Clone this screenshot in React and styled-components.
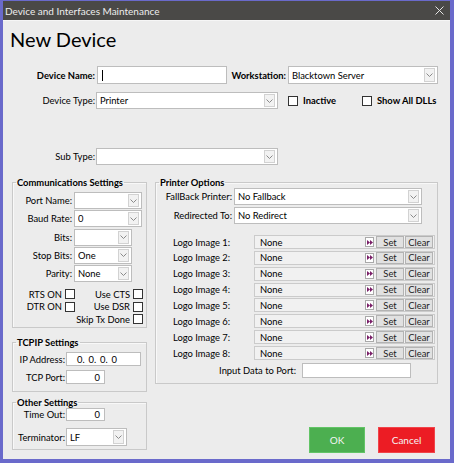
import React from "react"
import styled, { createGlobalStyle } from "styled-components"

const GlobalStyle = createGlobalStyle`
  html, body {
    margin: 0;
    padding: 0;
    background: #6a6acb;
  }
  body {
    font-family: Lato, "Noto Sans", sans-serif;
    font-size: 9.4px;
    color: #000;
  }
  * {
    box-sizing: border-box;
  }
`

const Window = styled.div`
  width: 454px;
  height: 463px;
  border-style: solid;
  border-color: #6a6acb;
  border-width: 1px 4px 4px 3px;
  background: #ececec;
  display: flex;
  flex-direction: column;
`

const TitleBar = styled.div`
  height: 20px;
  flex: none;
  background: #4a4947;
  color: #eeeeee;
  display: flex;
  align-items: center;
  justify-content: space-between;
  padding: 0 6px 0 2px;
  font-size: 10px;
  border-bottom: 1px solid #f6f6f6;
`

const Body = styled.div`
  flex: 1;
  display: flex;
  flex-direction: column;
`

const Heading = styled.h1`
  margin: 6px 0 0 7px;
  font-size: 20px;
  line-height: 24px;
  font-weight: 400;
`

const Row = styled.div`
  display: flex;
  align-items: center;
  flex: none;
  height: ${p => p.$h || 17}px;
  margin-top: ${p => p.$mt || 0}px;
`

const FieldLabel = styled.label`
  flex: none;
  width: ${p => p.$w}px;
  margin-left: ${p => p.$ml || 0}px;
  margin-right: ${p => (p.$gap === undefined ? 2 : p.$gap)}px;
  padding-left: ${p => p.$pl || 0}px;
  text-align: ${p => (p.$left ? "left" : "right")};
  font-weight: ${p => (p.$bold ? 700 : 400)};
  white-space: nowrap;
`

const TextBox = styled.div`
  flex: none;
  width: ${p => p.$w}px;
  height: ${p => p.$h || 17}px;
  background: #fff;
  border: 1px solid #bdbdbd;
  display: flex;
  align-items: center;
  justify-content: ${p => (p.$right ? "flex-end" : "flex-start")};
  padding: 0 ${p => (p.$right ? 4 : 3)}px 0 3px;
  white-space: pre;
`

const Caret = styled.span`
  width: 1px;
  height: 11px;
  margin-left: 1px;
  background: #000;
`

const ComboBox = styled.div`
  flex: none;
  width: ${p => p.$w}px;
  height: ${p => p.$h || 17}px;
  background: #fff;
  border: 1px solid #bdbdbd;
  display: flex;
  align-items: center;
  padding: 1px 2px 1px 3px;
`

const ComboValue = styled.span`
  flex: 1;
  white-space: nowrap;
  overflow: hidden;
`

const ArrowBox = styled.span`
  flex: none;
  width: 11px;
  height: 100%;
  border: 1px solid #d2d2d2;
  background: #f2f2f2;
  display: flex;
  align-items: center;
  justify-content: center;
`

const Combo = ({ w, h, value }) => (
  <ComboBox $w={w} $h={h}>
    <ComboValue>{value}</ComboValue>
    <ArrowBox>
      <svg width="7" height="4" viewBox="0 0 7 4">
        <polyline points="0.5,0.5 3.5,3.5 6.5,0.5" fill="none" stroke="#8a8a8a" strokeWidth="1" />
      </svg>
    </ArrowBox>
  </ComboBox>
)

const CheckBox = styled.span`
  flex: none;
  width: 10px;
  height: 10px;
  background: #fff;
  border: 1px solid #333;
`

const CheckItem = styled.label`
  flex: none;
  display: flex;
  align-items: center;
  gap: 5px;
  width: ${p => (p.$w ? `${p.$w}px` : "auto")};
  margin-left: ${p => p.$ml || 0}px;
  font-weight: 700;
`

const Lower = styled.div`
  display: flex;
  gap: 8px;
  margin: 12px 0 0 9px;
`

const Column = styled.div`
  flex: none;
  width: ${p => p.$w}px;
  display: flex;
  flex-direction: column;
`

const Group = styled.fieldset`
  margin: ${p => p.$mt || 0}px 0 0;
  padding: ${p => p.$pt || 0}px 0 0;
  min-width: 0;
  height: ${p => p.$h}px;
  border: 1px solid #c9c9c9;
  box-shadow: inset 1px 1px 0 #f8f8f8;
`

const Legend = styled.legend`
  margin-left: 3px;
  padding: 0 1px;
  font-weight: 700;
  line-height: 11px;
`

const Stack = styled.div`
  display: flex;
  flex-direction: column;
  gap: ${p => p.$gap || 0}px;
  margin-top: ${p => p.$mt || 0}px;
`

const CheckGrid = styled.div`
  display: grid;
  grid-template-columns: 63px 68px;
  grid-auto-rows: 10px;
  row-gap: 2.5px;
  margin-top: 7px;
`

const CheckCell = styled.label`
  grid-column: ${p => p.$col};
  display: flex;
  justify-content: flex-end;
  align-items: center;
  gap: 3px;
  padding-right: 1px;
  white-space: nowrap;
`

const IpText = styled.span`
  width: 11.5px;
`

const LogoLabel = styled.span`
  flex: none;
  width: 98px;
  padding-left: 17px;
`

const LogoBox = styled.div`
  flex: none;
  width: 181px;
  height: 14px;
  border: 1px solid #cbcbcb;
  background: #f1f1f1;
  display: flex;
  align-items: center;
  padding: 0 1px 0 5px;
`

const LogoValue = styled.span`
  flex: 1;
`

const PickButton = styled.span`
  flex: none;
  width: 9px;
  height: 10px;
  background: #fff;
  border: 1px solid #a9a9a9;
  display: flex;
  align-items: center;
  justify-content: center;
`

const SmallButton = styled.span`
  flex: none;
  width: ${p => p.$w}px;
  height: 12px;
  margin-left: ${p => p.$ml}px;
  background: #e1e1e1;
  border: 1px solid #b3b3b3;
  display: flex;
  align-items: center;
  justify-content: center;
  color: #222;
`

const ButtonRow = styled.div`
  display: flex;
  justify-content: flex-end;
  gap: 13px;
  padding-right: 3px;
  margin-top: 43px;
`

const DialogButton = styled.button`
  width: ${p => p.$w}px;
  height: 26px;
  border: 1px solid ${p => p.$edge};
  background: ${p => p.$bg};
  color: #f4f4f4;
  font-family: inherit;
  font-size: 10px;
  padding: 0;
`

const logos = [1, 2, 3, 4, 5, 6, 7, 8]

export default function App() {
  return (
    <>
      <GlobalStyle />
      <Window>
        <TitleBar>
          <span>Device and Interfaces Maintenance</span>
          <svg width="9" height="9" viewBox="0 0 9 9">
            <path d="M0.5 0.5 L8.5 8.5 M8.5 0.5 L0.5 8.5" stroke="#e6e6e6" strokeWidth="1" />
          </svg>
        </TitleBar>
        <Body>
          <Heading>New Device</Heading>

          <Row $h={18} $mt={15}>
            <FieldLabel $w={92} $bold>Device Name:</FieldLabel>
            <TextBox $w={130} $h={18}><Caret /></TextBox>
            <FieldLabel $w={57} $ml={2} $bold>Workstation:</FieldLabel>
            <Combo w={150} h={18} value="Blacktown Server" />
          </Row>

          <Row $mt={8}>
            <FieldLabel $w={92} $gap={1}>Device Type:</FieldLabel>
            <Combo w={182} value="Printer" />
            <CheckItem $ml={10} $w={74}><CheckBox />Inactive</CheckItem>
            <CheckItem><CheckBox />Show All DLLs</CheckItem>
          </Row>

          <Row $mt={39}>
            <FieldLabel $w={92} $gap={1}>Sub Type:</FieldLabel>
            <Combo w={182} value="" />
          </Row>

          <Lower>
            <Column $w={135}>
              <Group $h={151} $pt={4}>
                <Legend>Communications Settings</Legend>
                <Stack $gap={1.3}>
                  <Row>
                    <FieldLabel $w={59}>Port Name:</FieldLabel>
                    <Combo w={68} value="" />
                  </Row>
                  <Row>
                    <FieldLabel $w={59}>Baud Rate:</FieldLabel>
                    <Combo w={68} value="0" />
                  </Row>
                  <Row>
                    <FieldLabel $w={59}>Bits:</FieldLabel>
                    <Combo w={58} value="" />
                  </Row>
                  <Row>
                    <FieldLabel $w={59}>Stop Bits:</FieldLabel>
                    <Combo w={58} value="One" />
                  </Row>
                  <Row>
                    <FieldLabel $w={59}>Parity:</FieldLabel>
                    <Combo w={58} value="None" />
                  </Row>
                </Stack>
                <CheckGrid>
                  <CheckCell $col={1}>RTS ON<CheckBox /></CheckCell>
                  <CheckCell $col={2}>Use CTS<CheckBox /></CheckCell>
                  <CheckCell $col={1}>DTR ON<CheckBox /></CheckCell>
                  <CheckCell $col={2}>Use DSR<CheckBox /></CheckCell>
                  <CheckCell $col={2}>Skip Tx Done<CheckBox /></CheckCell>
                </CheckGrid>
              </Group>

              <Group $h={55} $pt={4} $mt={9}>
                <Legend>TCPIP Settings</Legend>
                <Stack $gap={4}>
                  <Row $h={14}>
                    <FieldLabel $w={52} $gap={1}>IP Address:</FieldLabel>
                    <TextBox $w={75} $h={14} style={{ paddingLeft: 10 }}>
                      <IpText>0.</IpText>
                      <IpText>0.</IpText>
                      <IpText>0.</IpText>
                      <IpText>0</IpText>
                    </TextBox>
                  </Row>
                  <Row $h={14}>
                    <FieldLabel $w={52} $gap={1}>TCP Port:</FieldLabel>
                    <TextBox $w={39} $h={14} $right>0</TextBox>
                  </Row>
                </Stack>
              </Group>

              <Group $h={53} $pt={0} $mt={5}>
                <Legend>Other Settings</Legend>
                <Row $h={13}>
                  <FieldLabel $w={52} $gap={1}>Time Out:</FieldLabel>
                  <TextBox $w={39} $h={13} $right>0</TextBox>
                </Row>
                <Row $h={18} $mt={7}>
                  <FieldLabel $w={52} $gap={1}>Terminator:</FieldLabel>
                  <Combo w={61} h={18} value="LF" />
                </Row>
              </Group>
            </Column>

            <Column $w={283}>
              <Group $h={207} $pt={0}>
                <Legend>Printer Options</Legend>
                <Row>
                  <FieldLabel $w={76}>FallBack Printer:</FieldLabel>
                  <Combo w={188} value="No Fallback" />
                </Row>
                <Row $mt={2}>
                  <FieldLabel $w={76}>Redirected To:</FieldLabel>
                  <Combo w={188} value="No Redirect" />
                </Row>
                <Stack $gap={1.86} $mt={11}>
                  {logos.map(n => (
                    <Row key={n} $h={14}>
                      <LogoLabel>Logo Image {n}:</LogoLabel>
                      <LogoBox>
                        <LogoValue>None</LogoValue>
                        <PickButton>
                          <svg width="6" height="5" viewBox="0 0 6 5">
                            <polygon points="0,0 3,2.5 0,5" fill="#7a1f68" />
                            <polygon points="3,0 6,2.5 3,5" fill="#7a1f68" />
                          </svg>
                        </PickButton>
                        <SmallButton $w={28} $ml={2}>Set</SmallButton>
                        <SmallButton $w={28} $ml={1}>Clear</SmallButton>
                      </LogoBox>
                    </Row>
                  ))}
                </Stack>
                <Row $h={15} $mt={3}>
                  <FieldLabel $w={140} $gap={6}>Input Data to Port:</FieldLabel>
                  <TextBox $w={109} $h={15} />
                </Row>
              </Group>
              <ButtonRow>
                <DialogButton $w={56} $bg="#4caf50" $edge="#62c466">OK</DialogButton>
                <DialogButton $w={57} $bg="#ec1c24" $edge="#f0444a">Cancel</DialogButton>
              </ButtonRow>
            </Column>
          </Lower>
        </Body>
      </Window>
    </>
  )
}
